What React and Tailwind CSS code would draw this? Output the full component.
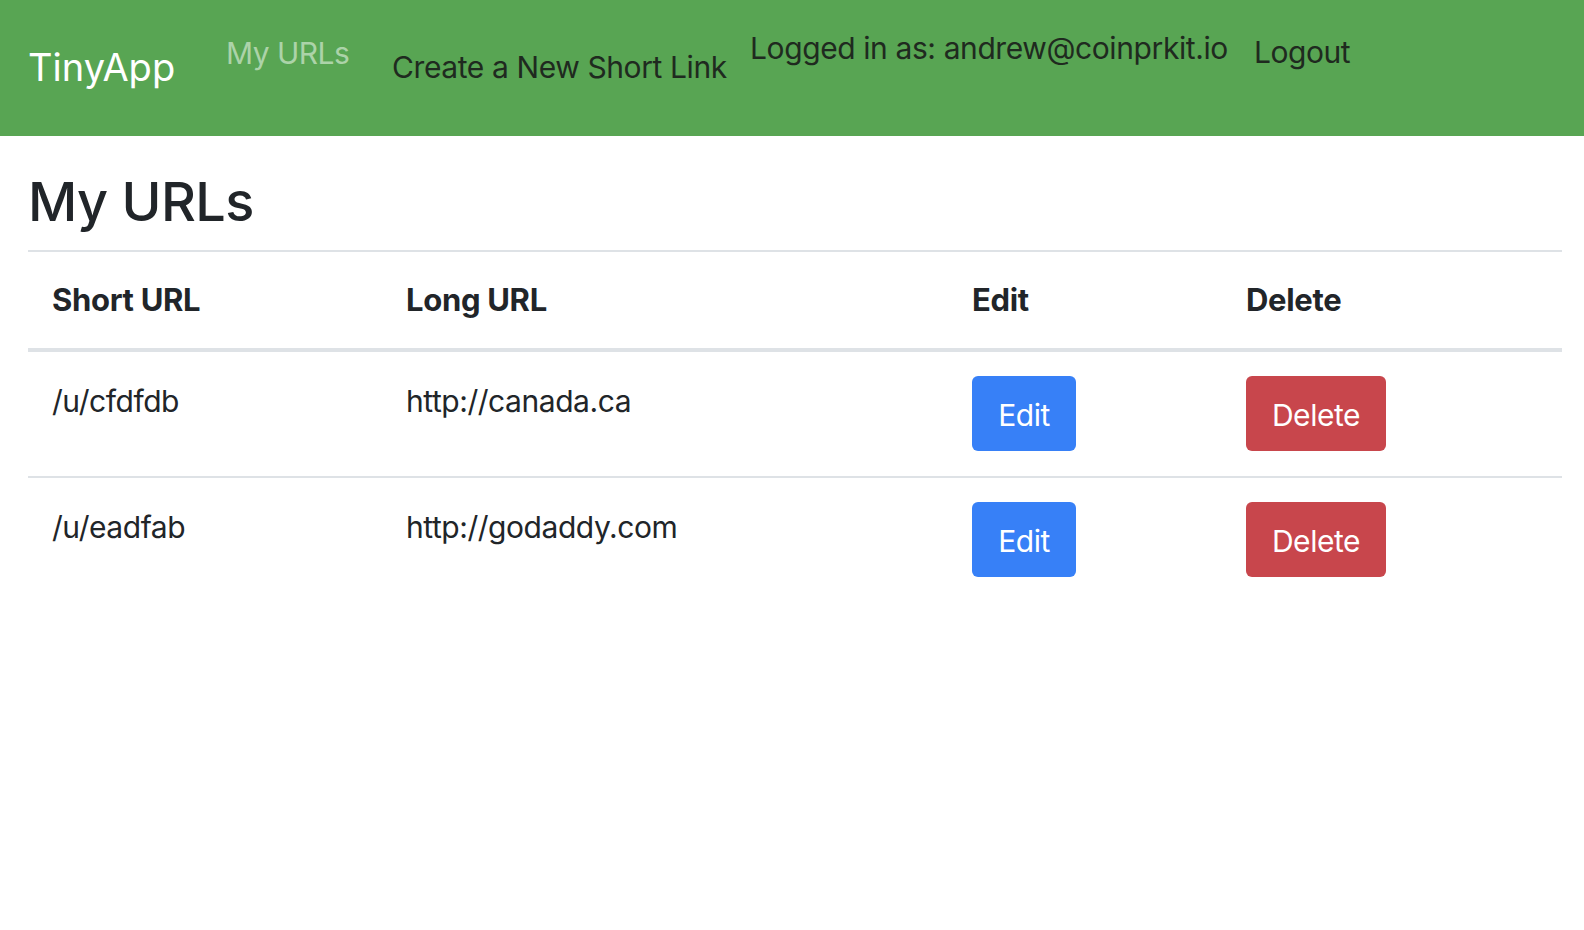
import React from "react";

const rows = [
  { short: "/u/cfdfdb", long: "http://canada.ca" },
  { short: "/u/eadfab", long: "http://godaddy.com" },
];

export default function App() {
  return (
    <div className="min-h-[930px] bg-white text-[#212529]" style={{ fontFamily: "Inter, 'Noto Sans', sans-serif" }}>
      <nav className="h-[136px] bg-[#58a553] flex items-start pl-[28px] tracking-[-0.025em]">
        <div className="w-[198px] mt-[44px] text-[38px] leading-[46px] text-white tracking-[0em]">TinyApp</div>
        <div className="w-[166px] mt-[33px] text-[30px] leading-[40px] text-[#acd3a9] tracking-[-0.018em]">My URLs</div>
        <div className="w-[358px] mt-[47px] text-[30px] leading-[40px] text-[#1f2a1f]">Create a New Short Link</div>
        <div className="w-[504px] mt-[28px] text-[30px] leading-[40px] text-[#1f2a1f]">Logged in as: andrew@coinprkit.io</div>
        <div className="mt-[32px] text-[30px] leading-[40px] text-[#1f2a1f] tracking-[-0.015em]">Logout</div>
      </nav>
      <main className="pl-[28px] pr-[22px]">
        <h1 className="mt-[34px] mb-[16px] text-[54px] leading-[64px] font-medium tracking-[-0.01em]">My URLs</h1>
        <div className="border-t-2 border-[#dee2e6]">
          <div className="flex border-b-4 border-[#dee2e6] text-[31px] font-bold h-[100px] items-center tracking-[-0.01em]">
            <div className="w-[378px] pl-[24px]">Short URL</div>
            <div className="w-[566px]">Long URL</div>
            <div className="w-[274px]">Edit</div>
            <div>Delete</div>
          </div>
          {rows.map((r, i) => (
            <div key={i} className={"flex items-start pt-[24px] pb-[25px] text-[30px] tracking-[-0.015em] " + (i === 0 ? "border-b-2 border-[#dee2e6]" : "")}>
              <div className="w-[378px] pl-[24px] leading-[50px]">{r.short}</div>
              <div className="w-[566px] leading-[50px]">{r.long}</div>
              <div className="w-[274px]">
                <button className="w-[104px] h-[75px] pt-[3px] rounded-[6px] bg-[#3780f7] text-white text-[30px]">Edit</button>
              </div>
              <div>
                <button className="w-[140px] h-[75px] pt-[3px] rounded-[6px] bg-[#c8464c] text-white text-[30px]">Delete</button>
              </div>
            </div>
          ))}
        </div>
      </main>
    </div>
  );
}
